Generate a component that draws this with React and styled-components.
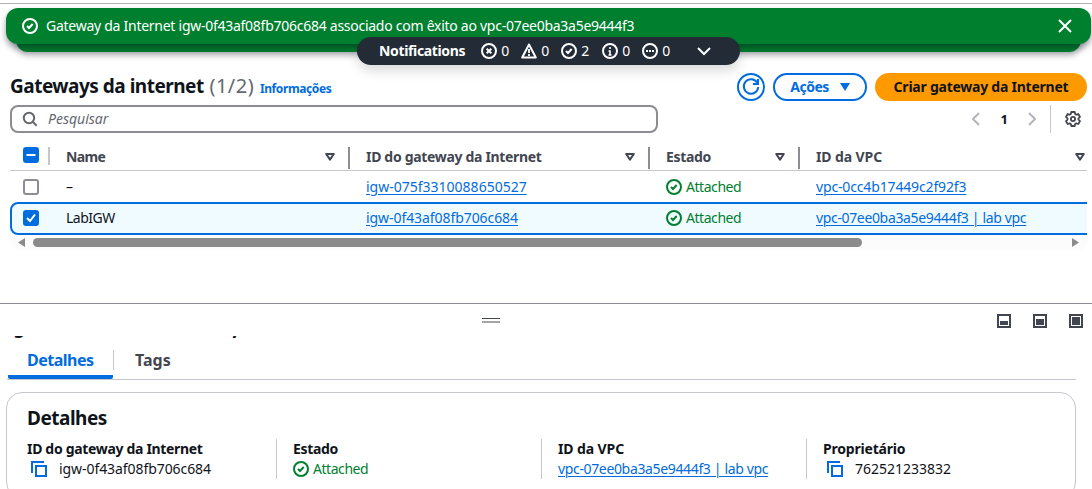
import React from 'react';
import styled, { createGlobalStyle } from 'styled-components';

const c = {
  blue: '#006ce0', green: '#00802f', ink: '#0f141a', head: '#424650',
  grey: '#8c8c94', line: '#c6c6cd', muted: '#656871',
};

const Global = createGlobalStyle`
  * { box-sizing: border-box; }
  body { margin: 0; background: #fff; overflow: hidden; }
`;

const Page = styled.div`
  height: 489px;
  overflow: hidden;
  font: 400 14px/20px "Noto Sans", "Open Sans", sans-serif;
  color: ${c.ink};
  display: flex;
  flex-direction: column;
`;
const Text = styled.span`
  white-space: nowrap;
  font-size: ${p => p.$size || 14}px;
  font-weight: ${p => (p.$bold ? 700 : 400)};
  font-style: ${p => (p.$italic ? 'italic' : 'normal')};
  letter-spacing: ${p => (p.$ls === undefined ? (p.$bold ? -0.32 : 0) : p.$ls)}px;
  color: ${p => p.$color || 'inherit'};
`;
const Link = styled.a`
  white-space: nowrap;
  color: ${c.blue};
  letter-spacing: ${p => p.$ls || 0}px;
  text-decoration: underline;
  text-decoration-thickness: 1px;
  text-underline-offset: 2px;
`;
const Svg = styled.svg`
  display: block;
  flex: none;
  fill: none;
  stroke: currentColor;
  stroke-width: 2;
`;

/* notifications */
const FlashArea = styled.header`
  position: relative;
  flex: none;
  height: 70px;
  padding: 4px 1px 0 6px;
  margin-top: 3px;
  border-top: 1px solid #b1b1b5;
`;
const Flash = styled.div`
  position: relative;
  z-index: 1;
  display: flex;
  align-items: center;
  height: 36px;
  padding: 0 19px 0 16px;
  border-radius: 12px;
  color: #fff;
  background: ${c.green};
  box-shadow: 0 4px 6px rgba(0, 7, 22, 0.4);
`;
const FlashText = styled.div`
  flex: 1;
  padding-left: 8px;
`;
const FlashBehind = styled.div`
  position: absolute;
  left: 16px;
  right: 11px;
  top: 24px;
  height: 24px;
  border-radius: 12px;
  background: ${c.green};
  box-shadow: 0 3px 6px rgba(0, 7, 22, 0.35);
`;
const Pill = styled.div`
  position: absolute;
  z-index: 2;
  left: 357px;
  top: 33px;
  width: 383px;
  height: 28px;
  padding: 0 28px 0 22px;
  display: flex;
  align-items: center;
  border-radius: 14px;
  color: #fff;
  background: #232b37;
  box-shadow: 0 6px 12px rgba(0, 7, 22, 0.14);
`;
const Counts = styled.div`
  display: grid;
  grid-template-columns: 40px 40px 41px 40px 40px;
  flex: 1;
  padding-left: 16px;
`;
const Count = styled.span`
  display: flex;
  align-items: center;
  gap: 4px;
`;

/* page heading */
const TitleBar = styled.div`
  flex: none;
  display: flex;
  justify-content: space-between;
  height: 28px;
  padding: 0 5px 0 10px;
`;
const Title = styled.h1`
  margin: 0;
  display: flex;
  align-items: baseline;
  font-size: 20px;
  line-height: 26px;
  font-weight: 700;
`;
const Buttons = styled.div`
  display: flex;
  gap: 8px;
`;
const Button = styled.button`
  display: flex;
  align-items: center;
  justify-content: center;
  gap: 11px;
  width: ${p => p.$w}px;
  height: 28px;
  padding: 0;
  border: 2px solid ${p => (p.$primary ? '#ff9900' : c.blue)};
  border-radius: 14px;
  color: ${p => (p.$primary ? c.ink : c.blue)};
  background: ${p => (p.$primary ? '#ff9900' : '#fff')};
  font: inherit;
`;
const FilterBar = styled.div`
  flex: none;
  display: flex;
  justify-content: space-between;
  height: 37px;
  padding: 4px 11px 4px 10px;
`;
const Search = styled.div`
  display: flex;
  align-items: center;
  gap: 10px;
  width: 648px;
  height: 28px;
  padding-left: 10px;
  border: 2px solid ${c.grey};
  border-radius: 8px;
  color: ${c.muted};
`;
const Pager = styled.div`
  display: flex;
  align-items: center;
  height: 28px;
  color: #b4b4bb;
`;
const PageNumber = styled.div`
  width: 48px;
  text-align: center;
  color: ${c.ink};
`;
const PagerRule = styled.div`
  width: 1px;
  height: 28px;
  margin: 0 14px;
  background: ${c.line};
`;

/* table */
const Table = styled.div`
  flex: none;
  width: 1077px;
  height: 112px;
  margin-left: 10px;
  overflow: hidden;
`;
const Row = styled.div`
  display: grid;
  grid-template-columns: 40px 300px 300px 150px 300px;
  width: 1090px;
  height: ${p => p.$h}px;
  border-bottom: ${p => (p.$head ? `1px solid ${c.line}` : '0')};
  color: ${p => (p.$head ? c.head : c.ink)};
`;
const SelectedRow = styled(Row)`
  padding-bottom: 2px;
  border: 2px solid ${c.blue};
  border-radius: 8px;
  background: #f0fbff;
  > * { margin-left: -2px; }
`;
const Cell = styled.div`
  display: flex;
  align-items: center;
  gap: 4px;
  padding-left: 16px;
`;
const HeadCell = styled(Cell)`
  justify-content: space-between;
  padding-right: 13px;
  padding-bottom: 2px;
  margin: 9px 0 5px;
  border-right: 2px solid ${c.grey};
`;
const CheckCell = styled.div`
  display: flex;
  align-items: center;
  padding-left: 13px;
`;
const HeadCheck = styled(CheckCell)`
  height: 18px;
  margin-top: 9px;
  border-right: 2px solid ${c.line};
  align-items: flex-start;
`;
const Box = styled.span`
  display: block;
  width: 16px;
  height: 16px;
  border: 2px solid ${p => (p.$on ? c.blue : c.grey)};
  border-radius: 3px;
  background: ${p => (p.$on ? c.blue : '#fff')};
`;
const ScrollTrack = styled.div`
  display: flex;
  align-items: center;
  height: 15px;
  padding: 0 8px;
  color: #8b8b8b;
  background: #fcfcfc;
  border-radius: 0 0 8px 8px;
`;
const ScrollSpace = styled.div`
  flex: 1;
  padding: 0 8px;
`;
const ScrollThumb = styled.div`
  width: 829px;
  height: 9px;
  border-radius: 5px;
  background: #8b8b8b;
`;

/* split panel */
const Panel = styled.section`
  flex: none;
  margin-top: 53px;
  border-top: 1px solid ${c.grey};
`;
const PanelBar = styled.div`
  display: flex;
  justify-content: space-between;
  height: 32px;
  padding: 10px 9px 0 482px;
  color: ${c.head};
`;
const Handle = styled.div`
  width: 18px;
  height: 5px;
  margin-top: 4px;
  border-top: 1px solid ${c.head};
  border-bottom: 2px solid #a4a4ad;
`;
const PanelIcons = styled.div`
  display: flex;
  gap: 22px;
`;
/* heading scrolled under the panel bar: only the descenders show */
const ClippedTitle = styled.div`
  display: flex;
  align-items: flex-end;
  height: 4px;
  margin-left: 8px;
  overflow: hidden;
  line-height: 25px;
`;
const Slash = styled.span`
  margin-left: 21px;
  font-size: 20px;
  font-weight: 700;
  line-height: 19px;
`;
const Tabs = styled.nav`
  display: flex;
  height: 40px;
  width: 1069px;
  margin-left: 7px;
  padding-left: 1px;
  border-bottom: 1px solid ${c.line};
`;
const Tab = styled.div`
  width: 105px;
  height: 39px;
  padding: 10px 0 0 ${p => (p.$active ? 19 : 21)}px;
  color: ${p => (p.$active ? c.blue : c.head)};
  border-bottom: ${p => (p.$active ? `4px solid ${c.blue}` : '0')};
  border-radius: 2px;
`;
const TabRule = styled.div`
  width: 1px;
  height: 20px;
  margin-top: 10px;
  background: ${c.line};
`;
const Card = styled.div`
  width: 1070px;
  height: 106px;
  margin: 12px 0 0 6px;
  padding: 11px 20px 0;
  border: 1px solid ${c.line};
  border-radius: 16px;
`;
const CardTitle = styled.h2`
  margin: 0 0 7px;
  font-size: 20px;
  line-height: 27px;
`;
const Fields = styled.div`
  display: grid;
  grid-template-columns: 250px 265px 265px 1fr;
`;
const Field = styled.div`
  height: 40px;
  padding-left: ${p => (p.$first ? 0 : 16)}px;
  margin-left: ${p => (p.$first ? 0 : -1)}px;
  border-left: ${p => (p.$first ? '0' : `1px solid ${c.line}`)};
`;
const Value = styled.div`
  display: flex;
  align-items: center;
  gap: ${p => p.$gap || 4}px;
  height: 20px;
  padding-left: ${p => p.$inset || 0}px;
`;
const Status = styled(Value)`
  color: ${c.green};
`;
const CopyHolder = styled.span`
  color: ${c.blue};
`;
const GearHolder = styled.span`
  color: ${c.head};
`;

const Ring = ({ children }) => (
  <Svg width="16" height="16" viewBox="0 0 16 16"><circle cx="8" cy="8" r="7" />{children}</Svg>
);
const CheckIcon = () => <Ring><path d="m5 8 2 2 3.7-4" /></Ring>;
const CopyIcon = () => (
  <CopyHolder>
    <Svg width="16" height="16" viewBox="0 0 16 16"><path d="M1 12V1h12M5 5h10v10H5z" /></Svg>
  </CopyHolder>
);
const SortIcon = () => (
  <Svg width="10" height="8" viewBox="0 0 10 8"><path d="M1.2 1h7.600L5 6.600z" strokeLinejoin="round" /></Svg>
);
const Chevron = ({ d, w, h }) => (
  <Svg width={w} height={h} viewBox={`0 0 ${w} ${h}`}><path d={d} /></Svg>
);
const PanelIcon = ({ y }) => (
  <Svg width="14" height="14" viewBox="0 0 14 14">
    <path d="M1 1h12v12H1z" />
    <path d={`M3 ${y}h8v${11 - y}H3z`} fill="currentColor" stroke="none" />
  </Svg>
);
const Attached = () => <Status><CheckIcon /><Text $ls={-0.45}>Attached</Text></Status>;

export default function App() {
  return (
    <Page>
      <Global />
      <FlashArea>
        <FlashBehind />
        <Flash>
          <CheckIcon />
          <FlashText>
            <Text $ls={-0.265}>Gateway da Internet igw-0f43af08fb706c684 associado com êxito ao vpc-07ee0ba3a5e9444f3</Text>
          </FlashText>
          <Svg width="14" height="14" viewBox="0 0 14 14"><path d="m1 1 12 12M13 1 1 13" /></Svg>
        </Flash>
        <Pill>
          <Text $bold $ls={-0.35}>Notifications</Text>
          <Counts>
            <Count><Ring><path d="m5.7 5.7 4.6 4.6M10.3 5.7l-4.6 4.6" /></Ring>0</Count>
            <Count>
              <Svg width="16" height="16" viewBox="0 0 16 16"><path d="M8 1.500 1.200 14.500h13.600z" strokeLinejoin="round" /><path d="M8 6v4M8 11v2" strokeWidth="1.800" /></Svg>0
            </Count>
            <Count><CheckIcon />2</Count>
            <Count><Ring><path d="M8 4v2M6.500 8H8v4M6.500 12h3" strokeWidth="1.600" /></Ring>0</Count>
            <Count><Ring><path d="M4 8h2M7 8h2M10 8h2" /></Ring>0</Count>
          </Counts>
          <Chevron w={16} h={10} d="m2 2 6 6 6-6" />
        </Pill>
      </FlashArea>

      <TitleBar>
        <Title>
          <Text $bold $size={19} $ls={-0.5}>Gateways da internet</Text>
          <Text $size={20} $ls={0.5} $color={c.muted}>&nbsp;(1/2)&nbsp;</Text>
          <Text $bold $size={12} $ls={-0.4} $color={c.blue}>Informações</Text>
        </Title>
        <Buttons>
          <Button $w={28}>
            <Svg width="18" height="18" viewBox="0 0 18 18"><path d="M15 4.5A7.2 7.2 0 1 0 16.2 9M16 1v5h-5" /></Svg>
          </Button>
          <Button $w={94}>
            <Text $bold $ls={-0.5}>Ações</Text>
            <Svg width="10" height="8" viewBox="0 0 10 8"><path d="M0 0h10L5 8z" fill="currentColor" stroke="none" /></Svg>
          </Button>
          <Button $w={212} $primary><Text $bold $ls={-0.24}>Criar gateway da Internet</Text></Button>
        </Buttons>
      </TitleBar>

      <FilterBar>
        <Search>
          <Svg width="16" height="16" viewBox="0 0 16 16"><circle cx="7" cy="7" r="5.2" /><path d="m10.7 10.7 4 4" /></Svg>
          <Text $italic>Pesquisar</Text>
        </Search>
        <Pager>
          <Chevron w={8} h={14} d="M7 1 1 7l6 6" />
          <PageNumber><Text $bold $size={13}>1</Text></PageNumber>
          <Chevron w={8} h={14} d="m1 1 6 6-6 6" />
          <PagerRule />
          <GearHolder>
            <Svg width="16" height="16" viewBox="0 0 16 16">
              <path d="M6.3 1h3.400l.5 2 1.100.6 2-.6 1.700 2.900L13.500 7.300v1.400l1.500 1.400-1.700 2.900-2-.6-1.100.6-.5 2H6.300l-.5-2-1.100-.6-2 .6L1 10.100l1.500-1.400V7.300L1 5.900 2.700 3l2 .6L5.800 3z" strokeLinejoin="round" strokeWidth="1.800" />
              <circle cx="8" cy="8" r="2.1" strokeWidth="1.800" />
            </Svg>
          </GearHolder>
        </Pager>
      </FilterBar>

      <Table>
        <Row $head $h={33}>
          <HeadCheck><Box $on><Svg width="12" height="12" viewBox="0 0 12 12" color="#fff"><path d="M1.500 6h9" /></Svg></Box></HeadCheck>
          <HeadCell><Text $bold $ls={-0.6}>Name</Text><SortIcon /></HeadCell>
          <HeadCell><Text $bold>ID do gateway da Internet</Text><SortIcon /></HeadCell>
          <HeadCell><Text $bold>Estado</Text><SortIcon /></HeadCell>
          <HeadCell><Text $bold $ls={-0.1}>ID da VPC</Text><SortIcon /></HeadCell>
        </Row>
        <Row $h={31}>
          <CheckCell><Box /></CheckCell>
          <Cell>–</Cell>
          <Cell><Link>igw-075f3310088650527</Link></Cell>
          <Cell><Attached /></Cell>
          <Cell><Link $ls={-0.15}>vpc-0cc4b17449c2f92f3</Link></Cell>
        </Row>
        <SelectedRow $h={33}>
          <CheckCell><Box $on><Svg width="12" height="12" viewBox="0 0 12 12" color="#fff"><path d="m2 6 3 3 5-6.500" /></Svg></Box></CheckCell>
          <Cell><Text $ls={-0.5}>LabIGW</Text></Cell>
          <Cell><Link $ls={-0.07}>igw-0f43af08fb706c684</Link></Cell>
          <Cell><Attached /></Cell>
          <Cell><Link $ls={-0.35}>vpc-07ee0ba3a5e9444f3 | lab vpc</Link></Cell>
        </SelectedRow>
        <ScrollTrack>
          <Svg width="7" height="9" viewBox="0 0 7 9"><path d="M7 0v9L0 4.500z" fill="currentColor" stroke="none" /></Svg>
          <ScrollSpace><ScrollThumb /></ScrollSpace>
          <Svg width="7" height="9" viewBox="0 0 7 9"><path d="M0 0v9l7-4.500z" fill="currentColor" stroke="none" /></Svg>
        </ScrollTrack>
      </Table>

      <Panel>
        <PanelBar>
          <Handle />
          <PanelIcons><PanelIcon y={7} /><PanelIcon y={5} /><PanelIcon y={3} /></PanelIcons>
        </PanelBar>
        <ClippedTitle>
          <Text $bold $size={18} $ls={0}>igw-0f43af08fb706c684</Text>
          <Slash>/</Slash>
        </ClippedTitle>
        <Tabs>
          <Tab $active><Text $bold $size={16} $ls={-0.5}>Detalhes</Text></Tab>
          <TabRule />
          <Tab><Text $bold $size={16} $ls={0}>Tags</Text></Tab>
        </Tabs>
        <Card>
          <CardTitle><Text $bold $size={19} $ls={-0.5}>Detalhes</Text></CardTitle>
          <Fields>
            <Field $first>
              <Text $bold>ID do gateway da Internet</Text>
              <Value $inset={4} $gap={12}><CopyIcon /><Text $ls={-0.07}>igw-0f43af08fb706c684</Text></Value>
            </Field>
            <Field><Text $bold>Estado</Text><Attached /></Field>
            <Field><Text $bold $ls={-0.1}>ID da VPC</Text><Value><Link $ls={-0.35}>vpc-07ee0ba3a5e9444f3 | lab vpc</Link></Value></Field>
            <Field>
              <Text $bold $ls={-0.2}>Proprietário</Text>
              <Value $inset={4} $gap={12}><CopyIcon /><Text>762521233832</Text></Value>
            </Field>
          </Fields>
        </Card>
      </Panel>
    </Page>
  );
}
